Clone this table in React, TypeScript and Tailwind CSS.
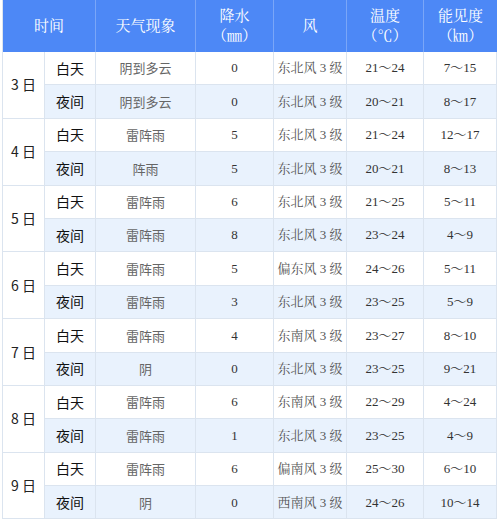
import React from "react";

type Row = [string, string, string, string, string];
const days: { d: string; rows: [Row, Row] }[] = [
  { d: "3 日", rows: [["阴到多云", "0", "东北风 3 级", "21～24", "7～15"], ["阴到多云", "0", "东北风 3 级", "20～21", "8～17"]] },
  { d: "4 日", rows: [["雷阵雨", "5", "东北风 3 级", "21～24", "12～17"], ["阵雨", "5", "东北风 3 级", "20～21", "8～13"]] },
  { d: "5 日", rows: [["雷阵雨", "6", "东北风 3 级", "21～25", "5～11"], ["雷阵雨", "8", "东北风 3 级", "23～24", "4～9"]] },
  { d: "6 日", rows: [["雷阵雨", "5", "偏东风 3 级", "24～26", "5～11"], ["雷阵雨", "3", "东北风 3 级", "23～25", "5～9"]] },
  { d: "7 日", rows: [["雷阵雨", "4", "东南风 3 级", "23～27", "8～10"], ["阴", "0", "东北风 3 级", "23～25", "9～21"]] },
  { d: "8 日", rows: [["雷阵雨", "6", "东南风 3 级", "22～29", "4～24"], ["雷阵雨", "1", "东北风 3 级", "23～25", "4～9"]] },
  { d: "9 日", rows: [["雷阵雨", "6", "偏南风 3 级", "25～30", "6～10"], ["阴", "0", "西南风 3 级", "24～26", "10～14"]] },
];

const serif = "font-['Liberation_Serif','Noto_Serif_CJK_SC','Noto_Sans_CJK_SC',serif]";
const sans = "font-['Noto_Sans_CJK_SC','Noto_Sans',sans-serif]";

export default function App() {
  return (
    <div className="w-[500px] h-[523px] bg-white pl-[2px]">
      <div className="grid grid-cols-[42px_51px_100px_78px_73px_77px_73px] grid-rows-[52px_repeat(14,33.4px)] border-l border-[#dbe4ef] w-[495px]">
        <div className={`col-span-2 bg-[#4d88f6] text-white text-[15px] flex items-center justify-center border-r border-[#7aa6f8] ${serif}`}>时间</div>
        <div className={`bg-[#4d88f6] text-white text-[15px] flex items-center justify-center border-r border-[#7aa6f8] ${serif}`}>天气现象</div>
        <div className={`bg-[#4d88f6] text-white text-[15px] leading-[20px] flex flex-col items-center justify-center border-r border-[#7aa6f8] ${serif}`}><span>降水</span><span>（㎜）</span></div>
        <div className={`bg-[#4d88f6] text-white text-[15px] flex items-center justify-center border-r border-[#7aa6f8] ${serif}`}>风</div>
        <div className={`bg-[#4d88f6] text-white text-[15px] leading-[20px] flex flex-col items-center justify-center border-r border-[#7aa6f8] ${serif}`}><span>温度</span><span>（℃）</span></div>
        <div className={`bg-[#4d88f6] text-white text-[15px] leading-[20px] flex flex-col items-center justify-center ${serif}`}><span>能见度</span><span>（㎞）</span></div>
        {days.map((day) => (
          <React.Fragment key={day.d}>
            <div className={`row-span-2 flex items-center justify-center text-[14px] text-[#222] border-r border-b border-[#dbe4ef] bg-white ${sans}`}>{day.d}</div>
            {day.rows.map((r, i) => {
              const bg = i === 1 ? "bg-[#e9f2fd]" : "bg-white";
              const cell = `flex items-center justify-center border-r border-b border-[#dbe4ef] ${bg}`;
              return (
                <React.Fragment key={i}>
                  <div className={`${cell} text-[14px] text-[#111] ${sans}`}>{i === 0 ? "白天" : "夜间"}</div>
                  <div className={`${cell} text-[13px] text-[#666] ${sans}`}>{r[0]}</div>
                  <div className={`${cell} text-[13px] text-[#333] ${serif}`}>{r[1]}</div>
                  <div className={`${cell} text-[13px] text-[#555] ${serif}`}>{r[2]}</div>
                  <div className={`${cell} text-[13px] text-[#333] ${serif}`}>{r[3]}</div>
                  <div className={`${cell} text-[13px] text-[#333] ${serif}`}>{r[4]}</div>
                </React.Fragment>
              );
            })}
          </React.Fragment>
        ))}
      </div>
    </div>
  );
}
